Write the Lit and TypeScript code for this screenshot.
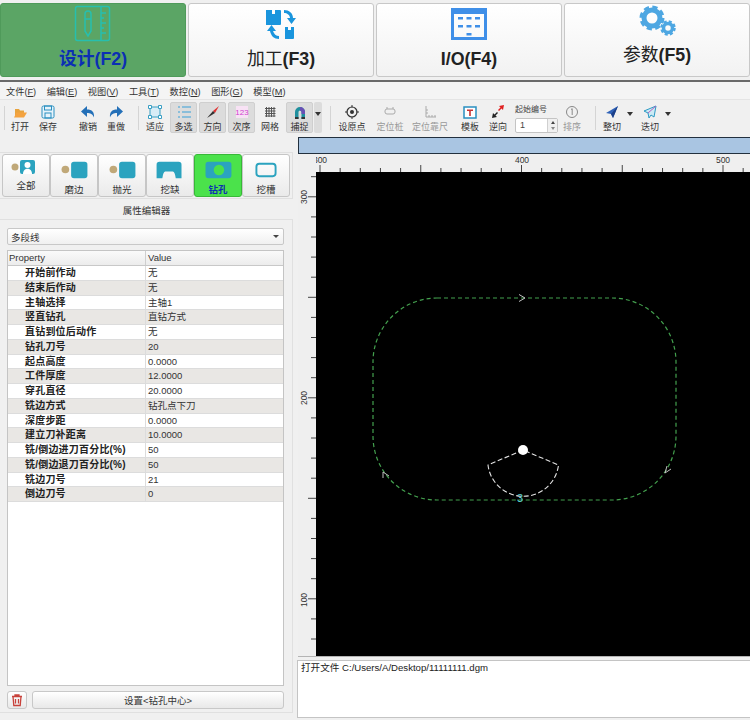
import { LitElement, html, css, svg } from 'lit';
import { customElement } from 'lit/decorators.js';

const TOOL_ICONS: Record<string, unknown> = {
  open: svg`<path d="M4 6h4l1 1.500h4V10H6l-2 4z" fill="#e8a33d"/><path d="M5.500 9.500H16l-3 5H3z" fill="#f4a340"/>`,
  save: svg`<rect x="3" y="3" width="12" height="12" rx="1.500" fill="#e6f3fb" stroke="#2a8fc0"/><rect x="5.500" y="3" width="7" height="4" fill="none" stroke="#2a8fc0"/><rect x="6" y="10" width="6" height="5" fill="none" stroke="#2a8fc0"/>`,
  undo: svg`<path d="M8 3v3.500c5 0 7.500 2.500 7 8-1.500-3.500-3.500-4.500-7-4.500V14L2 8.500z" fill="#2470b8"/>`,
  redo: svg`<path d="M10 3v3.500c-5 0-7.500 2.500-7 8 1.500-3.500 3.500-4.500 7-4.500V14l6-5.500z" fill="#2470b8"/>`,
  fit: svg`<rect x="4" y="4" width="10" height="10" fill="#d8ecf6" stroke="#3a9fc4"/><path d="M2.500 2.500h3v3h-3zM12.500 2.500h3v3h-3zM2.500 12.500h3v3h-3zM12.500 12.500h3v3h-3z" fill="#fff" stroke="#3a9fc4"/>`,
  multi: svg`<path d="M3 4h2M7 4h9M3 9h2M7 9h9M3 14h2M7 14h9" stroke="#39a0d8" stroke-width="1.100"/>`,
  dir: svg`<path d="M15 3 9 8l2 2z" fill="#e03030"/><path d="M9 8 3 15l8-5z" fill="#333"/>`,
  order: svg`<rect x="3" y="3" width="12" height="12" fill="#f8e2f5"/><text x="9" y="12" text-anchor="middle" class="order">123</text>`,
  grid: svg`<path d="M5.500 4v10M8 4v10M10.500 4v10M13 4v10M4 5.500h10.500M4 8h10.500M4 10.500h10.500M4 13h10.500" stroke="#555" stroke-width="1"/>`,
  snap: svg`<path d="M4 16V9a5 5 0 0 1 10 0v7h-3.500V9a1.500 1.500 0 0 0-3 0v7z" fill="#1f8f9e"/><path d="M9 4a5 5 0 0 1 5 5v2h-3.500V9A1.500 1.500 0 0 0 9 7.500z" fill="#6a4fb5"/><path d="M4 14h3.500v2H4zM10.500 14H14v2h-3.500z" fill="#333"/>`,
  origin: svg`<circle cx="9" cy="9" r="5" fill="none" stroke="#333" stroke-width="1.200"/><circle cx="9" cy="9" r="2" fill="#333"/><path d="M9 2v2.500M9 13.500V16M2 9h2.500M13.500 9H16" stroke="#333"/>`,
  pin: svg`<rect x="4" y="6" width="10" height="5" rx="2" fill="none" stroke="#aaa"/><path d="M6 6V4M12 6V4" stroke="#aaa"/>`,
  rule: svg`<path d="M5 3v11h10M8 14v-2M11 14v-2M14 14v-2M5 7h2M5 10h2" fill="none" stroke="#aaa"/>`,
  template: svg`<rect x="3" y="4" width="12" height="11" fill="#fff" stroke="#2a8fc0" stroke-width="1.500"/><path d="M6 6.500h6V8h-2.200v5H8.200V8H6z" fill="#c83232"/>`,
  reverse: svg`<path d="M15 2l-1 5-1.500-1.500L10 8 9 7l2.500-2.500L10 3z" fill="#e02020"/><path d="M3 15l1-5 1.500 1.500L8 9l1 1-2.500 2.500L8 14z" fill="#222"/>`,
  sort: svg`<circle cx="9" cy="9" r="5.500" fill="none" stroke="#888"/><path d="M8 6.500l1.200-.8V12" fill="none" stroke="#888"/>`,
  cut: svg`<path d="M15 3 3 10l5 1 2 4z" fill="#2f62b8"/><path d="M15 3 8 11l2 4z" fill="#1c3f88"/>`,
  stack: svg`<path d="M15 3 3 8l4 2 1 5 2-3 3 2z" fill="#cdeaf5" stroke="#2c9ac4"/><path d="M15 3 7 10" stroke="#b060c0"/>`,
};

type ToolItem = { label?: string; icon?: string; width: number; kind?: string };

const TOOLS: ToolItem[] = [
  { width: 4 },
  { kind: 'sep', width: 2 },
  { label: '打开', icon: 'open', width: 28 },
  { label: '保存', icon: 'save', width: 28 },
  { width: 12 },
  { label: '撤销', icon: 'undo', width: 28 },
  { label: '重做', icon: 'redo', width: 28 },
  { width: 8 },
  { kind: 'sep', width: 2 },
  { label: '适应', icon: 'fit', width: 30 },
  { label: '多选', icon: 'multi', width: 27, kind: 'on' },
  { width: 2 },
  { label: '方向', icon: 'dir', width: 27, kind: 'on' },
  { width: 2 },
  { label: '次序', icon: 'order', width: 27, kind: 'on' },
  { width: 1 },
  { label: '网格', icon: 'grid', width: 28 },
  { width: 2 },
  { label: '捕捉', icon: 'snap', width: 27, kind: 'on' },
  { width: 1 },
  { kind: 'drop-on', width: 8 },
  { width: 8 },
  { kind: 'sep', width: 2 },
  { width: 2 },
  { label: '设原点', icon: 'origin', width: 36 },
  { width: 2 },
  { label: '定位桩', icon: 'pin', width: 36, kind: 'off' },
  { width: 4 },
  { label: '定位靠尺', icon: 'rule', width: 36, kind: 'off' },
  { width: 8 },
  { label: '模板', icon: 'template', width: 28 },
  { label: '逆向', icon: 'reverse', width: 28 },
  { width: 3 },
  { kind: 'start', width: 43 },
  { label: '排序', icon: 'sort', width: 28, kind: 'off' },
  { width: 9 },
  { kind: 'sep', width: 2 },
  { width: 1 },
  { label: '整切', icon: 'cut', width: 28 },
  { kind: 'drop', width: 8 },
  { width: 2 },
  { label: '迭切', icon: 'stack', width: 28 },
  { kind: 'drop', width: 8 },
];

const MENUS = [
  ['文件', 'F'],
  ['编辑', 'E'],
  ['视图', 'V'],
  ['工具', 'T'],
  ['数控', 'N'],
  ['图形', 'G'],
  ['模型', 'M'],
];

const PROPS = [
  ['开始前作动', '无'],
  ['结束后作动', '无'],
  ['主轴选择', '主轴1'],
  ['竖直钻孔', '直钻方式'],
  ['直钻到位后动作', '无'],
  ['钻孔刀号', '20'],
  ['起点高度', '0.0000'],
  ['工件厚度', '12.0000'],
  ['穿孔直径', '20.0000'],
  ['铣边方式', '钻孔点下刀'],
  ['深度步距', '0.0000'],
  ['建立刀补距离', '10.0000'],
  ['铣/倒边进刀百分比(%)', '50'],
  ['铣/倒边退刀百分比(%)', '50'],
  ['铣边刀号', '21'],
  ['倒边刀号', '0'],
];

const dot = svg`<circle cx="14" cy="12" r="4" fill="#c0a878"/>`;
const SHAPES = [
  {
    label: '全部',
    cls: 'high',
    icon: svg`<circle cx="12" cy="9" r="3.500" fill="#c0a878"/><rect x="17" y="2" width="15" height="14" rx="2" fill="#2ba3bf"/><circle cx="24.500" cy="7" r="3" fill="#fff"/><path d="M20 16c0-7 9-7 9 0z" fill="#fff"/>`,
  },
  { label: '磨边', cls: '', icon: svg`${dot}<rect x="20" y="4" width="17" height="17" rx="3" fill="#2ba3bf"/>` },
  { label: '抛光', cls: '', icon: svg`${dot}<rect x="20" y="4" width="17" height="17" rx="3" fill="#2ba3bf"/>` },
  {
    label: '挖缺',
    cls: '',
    icon: svg`<path d="M12 4h20q3 0 3 3v14h-6q-1-7-3-7h-8q-2 0-3 7H9V7q0-3 3-3z" fill="#2ba3bf"/>`,
  },
  {
    label: '钻孔',
    cls: 'active',
    icon: svg`<rect x="10" y="4" width="27" height="17" rx="3" fill="#2ba3bf"/><circle cx="24" cy="12.500" r="5.500" fill="#4be24b"/>`,
  },
  {
    label: '挖槽',
    cls: '',
    icon: svg`<rect x="13" y="6" width="20" height="13" rx="3" fill="none" stroke="#2ba3bf" stroke-width="2"/>`,
  },
];

const topTicks = Array.from({ length: 22 }, (_, i) => 320 + i * 20.15);
const leftTicks = Array.from({ length: 24 }, (_, i) => 176.7 + i * 20.1);

@customElement('app-root')
export class AppRoot extends LitElement {
  static styles = css`
    :host {
      display: block;
      width: 750px;
      height: 720px;
      overflow: hidden;
      background: #f0f0f0;
      color: #222;
      font-family: 'Liberation Sans', 'Noto Sans CJK SC', sans-serif;
      font-size: 9px;
    }
    svg {
      display: block;
    }
    .nav {
      display: flex;
      gap: 2px;
      height: 82px;
      box-sizing: border-box;
      padding: 3px 0;
      border-bottom: 2px solid #6a6a6a;
    }
    .tab {
      flex: 1;
      display: flex;
      flex-direction: column;
      align-items: center;
      border: 1px solid #c8c8c8;
      border-radius: 3px;
      background: linear-gradient(#ffffff, #f2f2f2);
      font-size: 17.8px;
    }
    .tab b {
      font-weight: 700;
    }
    .tab span {
      line-height: 21px;
      white-space: nowrap;
    }
    .tab.raise span {
      margin-top: -4px;
    }
    .tab.active {
      background: #5ba565;
      border-color: #4f9a5a;
      color: #0b2fb4;
      font-weight: 700;
    }
    .menu {
      display: flex;
      gap: 10.5px;
      height: 17px;
      box-sizing: border-box;
      padding: 1px 0 0 6px;
      align-items: center;
      background: #f4f4f4;
      font-size: 9.2px;
      color: #333;
    }
    .toolbar {
      display: flex;
      height: 36px;
      background: #f0f0f0;
      border-top: 1px solid #e4e4e4;
      box-sizing: border-box;
      padding-top: 2px;
    }
    .tool {
      display: flex;
      flex-direction: column;
      align-items: center;
      height: 31px;
      box-sizing: border-box;
      border: 1px solid transparent;
      border-radius: 2px;
      white-space: nowrap;
      line-height: 12px;
      color: #333;
    }
    .tool.on,
    .drop-on {
      background: #dcdcdc;
      border-color: #cfcfcf;
    }
    .tool.off {
      color: #999;
    }
    .tool svg {
      flex: none;
    }
    .order {
      font-size: 8px;
      fill: #d040d0;
      font-family: 'Liberation Sans', sans-serif;
    }
    .sep {
      width: 1px;
      margin: 4px 0;
      background: #d4d4d4;
      height: 24px;
    }
    .drop,
    .drop-on {
      display: flex;
      justify-content: center;
      padding-top: 10px;
      box-sizing: border-box;
      height: 31px;
      border-radius: 2px;
    }
    .drop i,
    .drop-on i {
      width: 0;
      height: 0;
      border: 3px solid transparent;
      border-top: 4px solid #333;
    }
    .start {
      display: flex;
      flex-direction: column;
      align-items: flex-start;
      padding-top: 2px;
      line-height: 12px;
      font-size: 8px;
      color: #444;
    }
    .spin {
      display: flex;
      width: 43px;
      height: 15px;
      margin-top: 2px;
      box-sizing: border-box;
      border: 1px solid #c4c4c4;
      border-radius: 2px;
      background: #fff;
      font-size: 9px;
      line-height: 13px;
    }
    .spin span {
      flex: 1;
      padding-left: 4px;
    }
    .spin div {
      width: 9px;
      display: flex;
      flex-direction: column;
      justify-content: space-around;
      align-items: center;
      border-left: 1px solid #d0d0d0;
      background: #f0f0f0;
    }
    .spin i {
      width: 0;
      height: 0;
      border: 2.5px solid transparent;
    }
    .spin i.up {
      border-top: 0;
      border-bottom: 3px solid #444;
    }
    .spin i.down {
      border-bottom: 0;
      border-top: 3px solid #888;
    }
    .main {
      display: flex;
      height: 585px;
    }
    .left {
      width: 297px;
      flex: none;
      box-sizing: border-box;
      padding-top: 17px;
    }
    .shapes {
      display: flex;
      width: 293px;
      height: 47px;
      box-sizing: border-box;
      padding: 1px 2px;
      border: 1px solid #e0e0e0;
      border-left: 0;
    }
    .shape {
      width: 48px;
      display: flex;
      flex-direction: column;
      align-items: center;
      box-sizing: border-box;
      border: 1px solid #c6c6c6;
      border-radius: 3px;
      background: linear-gradient(#fff, #eaeaea);
      font-size: 9.5px;
      line-height: 13px;
      padding-top: 3px;
      color: #333;
    }
    .shape span {
      margin-top: 2px;
    }
    .shape.high span {
      margin-top: 1px;
    }
    .shape.active {
      background: #4be24b;
      border-color: #38b838;
      color: #0b2fb4;
      font-weight: 700;
    }
    .title {
      width: 293px;
      height: 20px;
      line-height: 24px;
      text-align: center;
      font-size: 9.5px;
      color: #333;
    }
    .group {
      display: flex;
      flex-direction: column;
      width: 293px;
      height: 494px;
      box-sizing: border-box;
      padding: 8px 8px 3px 7px;
      border: 1px solid #e0e0e0;
      border-left: 0;
    }
    .combo {
      display: flex;
      align-items: center;
      justify-content: space-between;
      flex: none;
      height: 17px;
      box-sizing: border-box;
      padding: 0 4px 0 3px;
      border: 1px solid #c8c8c8;
      border-radius: 2px;
      background: linear-gradient(#fff, #f0f0f0);
      font-size: 9.5px;
      color: #333;
    }
    .combo i {
      width: 0;
      height: 0;
      border: 3px solid transparent;
      border-top: 3.5px solid #444;
      border-bottom: 0;
    }
    .table {
      flex: 1;
      margin-top: 5px;
      border: 1px solid #c4c4c4;
      background: #fff;
      font-size: 9.5px;
    }
    .row {
      display: grid;
      grid-template-columns: 137px 1fr;
      height: 14.75px;
      box-sizing: border-box;
      border-bottom: 1px solid #dcdcdc;
      line-height: 13.5px;
      color: #333;
    }
    .row.alt {
      background: #e9e7e4;
    }
    .row.head {
      height: 15px;
      background: linear-gradient(#fafafa, #ececec);
      border-bottom: 1px solid #c8c8c8;
    }
    .row.head div {
      padding-left: 1px;
    }
    .row.head div + div {
      border-left: 1px solid #cfcfcf;
      padding-left: 2px;
    }
    .row b {
      padding-left: 17px;
      font-size: 10px;
      font-weight: 700;
      letter-spacing: 0.2px;
      white-space: nowrap;
      color: #222;
    }
    .row > span {
      padding-left: 2px;
      border-left: 1px solid #dcdcdc;
    }
    .actions {
      display: flex;
      gap: 5px;
      flex: none;
      margin-top: 5px;
    }
    .actions button {
      height: 18px;
      padding: 0;
      border: 1px solid #c8c8c8;
      border-radius: 3px;
      background: linear-gradient(#fff, #e8e8e8);
      font: inherit;
      font-size: 9.5px;
      color: #333;
    }
    .actions .trash {
      width: 20px;
      display: flex;
      align-items: center;
      justify-content: center;
    }
    .actions .set {
      flex: 1;
    }
    .right {
      flex: 1;
      min-width: 0;
      display: flex;
      flex-direction: column;
      padding-top: 2px;
    }
    .bar {
      height: 17px;
      margin-left: 1px;
      box-sizing: border-box;
      background: #a9c5e2;
      border: 1px solid #22303e;
      border-right: 0;
    }
    .view {
      height: 503px;
      margin-left: 1px;
      box-sizing: border-box;
      display: grid;
      grid-template-columns: 18px 1fr;
      grid-template-rows: 18px 484px;
      border-bottom: 1px solid #b4b4b4;
      background: #efefef;
    }
    .ruler-text {
      font-size: 8.5px;
      fill: #333;
      font-family: 'Liberation Sans', sans-serif;
    }
    .canvas {
      background: #000;
    }
    .log {
      height: 58px;
      margin-top: 3px;
      box-sizing: border-box;
      padding: 0 3px;
      border: 1px solid #c4c4c4;
      border-right: 0;
      background: #fff;
      font-size: 9.6px;
      line-height: 13px;
      color: #222;
    }
  `;

  private renderTabIcon(i: number) {
    if (i === 0) {
      return svg`<g fill="none" stroke="#27bfae" stroke-width="1.500">
        <rect x="12.500" y="2.500" width="34" height="34" rx="2"/>
        <path d="M22 10v17l3 5 3-5V10a3 3 0 0 0-6 0zM22 15h6M38 3v33M38 9h5M38 14h3M38 19h5M38 24h3M38 29h5"/>
      </g>`;
    }
    if (i === 1) {
      return svg`<g fill="#1a95dd">
        <path d="M15 6h6v4h3V6h5q1 0 1 1v13q0 1-1 1H15z"/>
        <path d="M35 24h3v3h3v-3h3v11q0 1-1 1H35z" transform="translate(-1 -1)"/>
        <path d="M33 6c5 0 9 3 9 8h3l-4.500 6L36 14h3c0-3-3-5-6-5z"/>
        <path d="M28 35c-5 0-8-3-9-8h-3l4.500-6 4.500 6h-3c1 3 3 5 6 5z"/>
      </g>`;
    }
    if (i === 2) {
      return svg`<g fill="#3f8fe8">
        <path d="M12 4h36v32H12zM15 10v23h30V10z" fill-rule="evenodd"/>
        <path d="M19 13h5v2.500h-5zM27.500 13h5v2.500h-5zM36 13h5v2.500h-5zM19 21h5v2.500h-5zM27.500 21h5v2.500h-5zM36 21h5v2.500h-5zM27.500 29h5v2.500h-5z"/>
      </g>`;
    }
    return svg`<g fill="none" stroke="#4ea7e2">
      <circle cx="25" cy="14" r="8" stroke-width="5"/>
      <circle cx="25" cy="14" r="10.500" stroke-width="4" stroke-dasharray="5 3.250"/>
      <circle cx="41" cy="24" r="4.500" stroke-width="3.500"/>
      <circle cx="41" cy="24" r="6.500" stroke-width="2.500" stroke-dasharray="3 2.100"/>
    </g>`;
  }

  private renderTool(t: ToolItem) {
    const w = `width:${t.width}px`;
    if (t.kind === 'sep') return html`<div style=${w}><div class="sep"></div></div>`;
    if (t.kind === 'drop' || t.kind === 'drop-on') {
      return html`<div class=${t.kind} style=${w}><i></i></div>`;
    }
    if (t.kind === 'start') {
      return html`<div class="start" style=${w}>
        <span>起始编号</span>
        <div class="spin"><span>1</span><div><i class="up"></i><i class="down"></i></div></div>
      </div>`;
    }
    if (!t.label) return html`<div style=${w}></div>`;
    return html`<div class="tool ${t.kind ?? ''}" style=${w}>
      <svg width="18" height="18" viewBox="0 0 18 18">${TOOL_ICONS[t.icon!]}</svg>
      <span>${t.label}</span>
    </div>`;
  }

  render() {
    const tabs = ['设计', '加工', 'I/O', '参数'];
    return html`
      <div class="nav">
        ${tabs.map(
          (name, i) => html`<div class="tab ${i === 0 ? 'active' : ''} ${i === 3 ? 'raise' : ''}">
            <svg width="60" height="45" viewBox="0 0 60 45">${this.renderTabIcon(i)}</svg>
            <span>${i === 2 ? html`<b>${name}</b>` : name}<b>(F${i + 2})</b></span>
          </div>`
        )}
      </div>
      <div class="menu">
        ${MENUS.map(([name, key]) => html`<span>${name}(<u>${key}</u>)</span>`)}
      </div>
      <div class="toolbar">${TOOLS.map((t) => this.renderTool(t))}</div>
      <div class="main">
        <div class="left">
          <div class="shapes">
            ${SHAPES.map(
              (s) => html`<div class="shape ${s.cls}">
                <svg width="46" height="${s.cls === 'high' ? 20 : 24}" viewBox="0 0 46 ${s.cls === 'high' ? 20 : 24}">${s.icon}</svg>
                <span>${s.label}</span>
              </div>`
            )}
          </div>
          <div class="title">属性编辑器</div>
          <div class="group">
            <div class="combo"><span>多段线</span><i></i></div>
            <div class="table">
              <div class="row head"><div>Property</div><div>Value</div></div>
              ${PROPS.map(
                ([k, v], i) => html`<div class="row ${i % 2 ? 'alt' : ''}"><b>${k}</b><span>${v}</span></div>`
              )}
            </div>
            <div class="actions">
              <button class="trash">
                <svg width="14" height="14" viewBox="0 0 14 14" fill="none" stroke="#c8413a" stroke-width="1.300">
                  <path d="M2 3.500h10M5 3.500V2h4v1.500M3 3.500l.8 9h6.400l.8-9M5.500 6v4.500M8.500 6v4.500"/>
                </svg>
              </button>
              <button class="set">设置&lt;钻孔中心&gt;</button>
            </div>
          </div>
        </div>
        <div class="right">
          <div class="bar"></div>
          <div class="view">
            <div></div>
            <svg width="434" height="18" viewBox="316 154 434 18">
              ${topTicks.map((x, i) => {
                const long = i % 5 === 0;
                return svg`<path d="M${x} 172V${long ? 165 : 168}" stroke="#444"/>`;
              })}
              <text class="ruler-text" x="320" y="163" text-anchor="middle">300</text>
              <text class="ruler-text" x="522" y="163" text-anchor="middle">400</text>
              <text class="ruler-text" x="723" y="163" text-anchor="middle">500</text>
            </svg>
            <svg width="18" height="484" viewBox="298 172 18 484">
              ${leftTicks.map((y, i) => {
                const long = (i - 1) % 5 === 0;
                return svg`<path d="M${long ? 308 : 311} ${y}H316" stroke="#444"/>`;
              })}
              <text class="ruler-text" transform="translate(307 197) rotate(-90)" text-anchor="middle">300</text>
              <text class="ruler-text" transform="translate(307 398) rotate(-90)" text-anchor="middle">200</text>
              <text class="ruler-text" transform="translate(307 600) rotate(-90)" text-anchor="middle">100</text>
            </svg>
            <svg class="canvas" width="434" height="484" viewBox="316 172 434 484">
              <rect x="373" y="298" width="303" height="202" rx="64" ry="64" fill="none" stroke="#43a04e" stroke-width="1.200" stroke-dasharray="4 3"/>
              <g fill="none" stroke="#c0c0c0">
                <path d="M519 294.500 525 298l-6 3.500"/>
                <path d="M383 478v-6l6 4"/>
                <path d="M667 466l-2 7 6-4"/>
              </g>
              <path d="M523 450 488 465a35.500 35.500 0 0 0 70.500 0z" fill="none" stroke="#e4e4e4" stroke-dasharray="5 2.500" stroke-width="1.100"/>
              <circle cx="523" cy="450" r="5" fill="#fff"/>
              <text x="520" y="502" text-anchor="middle" font-size="11" font-family="Liberation Sans, sans-serif" fill="#5cd6d6">3</text>
            </svg>
          </div>
          <div class="log">打开文件 C:/Users/A/Desktop/11111111.dgm</div>
        </div>
      </div>
    `;
  }
}
